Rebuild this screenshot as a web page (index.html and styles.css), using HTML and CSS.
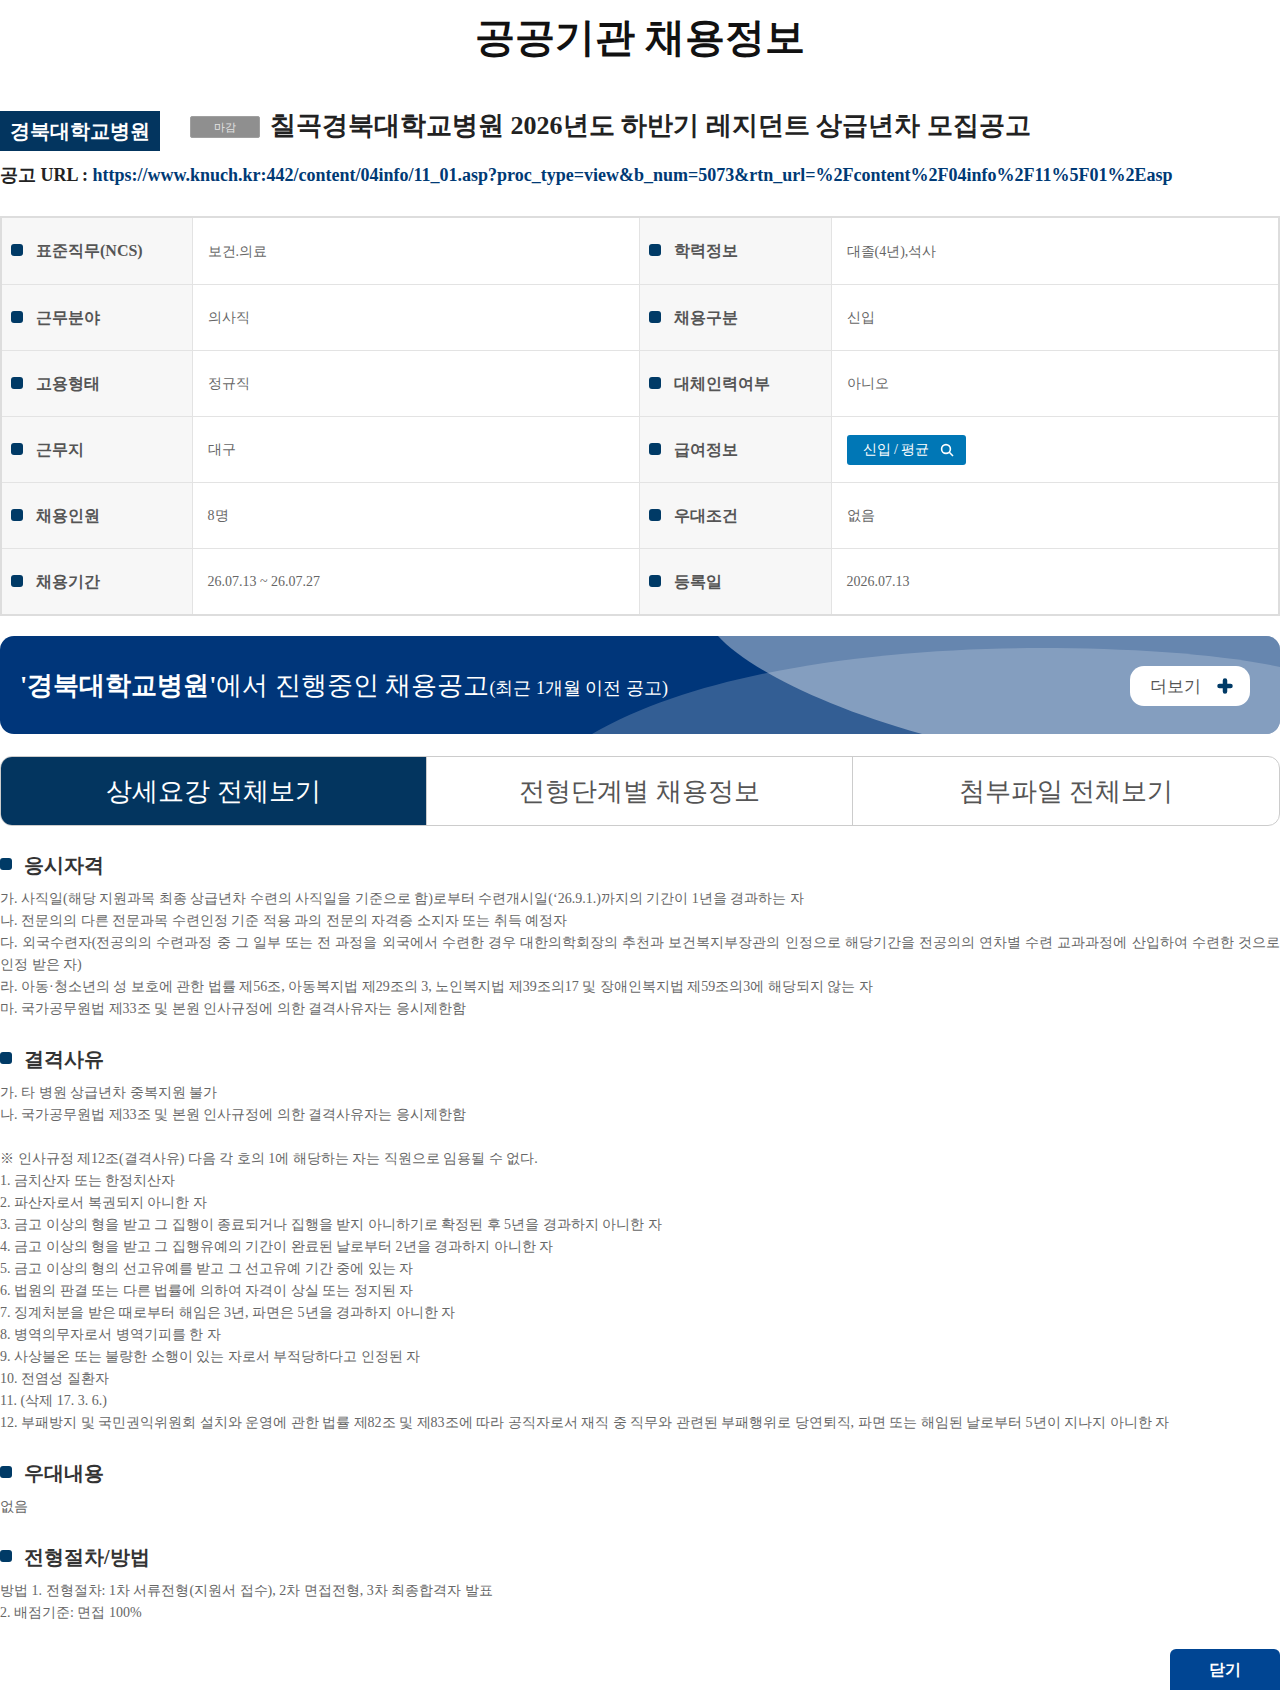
FILE: index.html
```html
<!DOCTYPE html>
<html>
<head>
  <meta charset="UTF-8">
  <title>공공기관 채용정보</title>
  <link rel="stylesheet" href="styles.css">
</head>
<body>
  <h1 class="page-title">공공기관 채용정보</h1>

  <!-- 공고 제목 -->
  <div class="job-head">
    <span class="org-name">경북대학교병원</span>
    <span class="closed">마감</span>
    <h2 class="job-title">칠곡경북대학교병원 2026년도 하반기 레지던트 상급년차 모집공고</h2>
  </div>
  <p class="job-url">공고 URL : <a href="#">https://www.knuch.kr:442/content/04info/11_01.asp?proc_type=view&amp;b_num=5073&amp;rtn_url=%2Fcontent%2F04info%2F11%5F01%2Easp</a></p>

  <!-- 요약 표 -->
  <table class="info">
    <tr>
      <th><span class="dot"></span>표준직무(NCS)</th><td>보건.의료</td>
      <th><span class="dot"></span>학력정보</th><td>대졸(4년),석사</td>
    </tr>
    <tr>
      <th><span class="dot"></span>근무분야</th><td>의사직</td>
      <th><span class="dot"></span>채용구분</th><td>신입</td>
    </tr>
    <tr>
      <th><span class="dot"></span>고용형태</th><td>정규직</td>
      <th><span class="dot"></span>대체인력여부</th><td>아니오</td>
    </tr>
    <tr>
      <th><span class="dot"></span>근무지</th><td>대구</td>
      <th><span class="dot"></span>급여정보</th>
      <td>
        <a class="pay-btn" href="#">신입 / 평균
          <svg width="14" height="14" viewBox="0 0 14 14" fill="none" stroke="#fff" stroke-width="1.6"><circle cx="6" cy="6" r="4.4"/><path d="M9.3 9.3L13 13"/></svg>
        </a>
      </td>
    </tr>
    <tr>
      <th><span class="dot"></span>채용인원</th><td>8명</td>
      <th><span class="dot"></span>우대조건</th><td>없음</td>
    </tr>
    <tr>
      <th><span class="dot"></span>채용기간</th><td>26.07.13 ~ 26.07.27</td>
      <th><span class="dot"></span>등록일</th><td>2026.07.13</td>
    </tr>
  </table>

  <!-- 진행중인 공고 배너 -->
  <div class="banner">
    <svg class="banner-bg" width="1280" height="98" viewBox="0 0 1280 98">
      <path d="M718 0C745 30 820 70 922 98L1280 98L1280 0Z" fill="#fff" fill-opacity="0.4"/>
      <path d="M592 98C700 35 880 12 1040 12C1130 12 1220 18 1280 31L1280 98Z" fill="#fff" fill-opacity="0.2"/>
    </svg>
    <p class="banner-text"><b>'경북대학교병원'</b>에서 진행중인 채용공고<small>(최근 1개월 이전 공고)</small></p>
    <a class="more" href="#">더보기
      <svg width="16" height="16" viewBox="0 0 16 16"><path d="M8 2.5V13.5M2.5 8H13.5" stroke="#003a66" stroke-width="4.5" stroke-linecap="round"/></svg>
    </a>
  </div>

  <div class="tabs">
    <a class="tab active" href="#">상세요강 전체보기</a>
    <a class="tab" href="#">전형단계별 채용정보</a>
    <a class="tab" href="#">첨부파일 전체보기</a>
  </div>

  <!-- 상세 내용 -->
  <section class="detail">
    <h3><span class="dot"></span>응시자격</h3>
    <p>가. 사직일(해당 지원과목 최종 상급년차 수련의 사직일을 기준으로 함)로부터 수련개시일(‘26.9.1.)까지의 기간이 1년을 경과하는 자<br>
    나. 전문의의 다른 전문과목 수련인정 기준 적용 과의 전문의 자격증 소지자 또는 취득 예정자<br>
    다. 외국수련자(전공의의 수련과정 중 그 일부 또는 전 과정을 외국에서 수련한 경우 대한의학회장의 추천과 보건복지부장관의 인정으로 해당기간을 전공의의 연차별 수련 교과과정에 산입하여 수련한 것으로 인정 받은 자)<br>
    라. 아동·청소년의 성 보호에 관한 법률 제56조, 아동복지법 제29조의 3, 노인복지법 제39조의17 및 장애인복지법 제59조의3에 해당되지 않는 자<br>
    마. 국가공무원법 제33조 및 본원 인사규정에 의한 결격사유자는 응시제한함</p>
  </section>
  <section class="detail">
    <h3><span class="dot"></span>결격사유</h3>
    <p>가. 타 병원 상급년차 중복지원 불가<br>
    나. 국가공무원법 제33조 및 본원 인사규정에 의한 결격사유자는 응시제한함<br>
    <br>
    ※ 인사규정 제12조(결격사유) 다음 각 호의 1에 해당하는 자는 직원으로 임용될 수 없다.<br>
    1. 금치산자 또는 한정치산자<br>
    2. 파산자로서 복권되지 아니한 자<br>
    3. 금고 이상의 형을 받고 그 집행이 종료되거나 집행을 받지 아니하기로 확정된 후 5년을 경과하지 아니한 자<br>
    4. 금고 이상의 형을 받고 그 집행유예의 기간이 완료된 날로부터 2년을 경과하지 아니한 자<br>
    5. 금고 이상의 형의 선고유예를 받고 그 선고유예 기간 중에 있는 자<br>
    6. 법원의 판결 또는 다른 법률에 의하여 자격이 상실 또는 정지된 자<br>
    7. 징계처분을 받은 때로부터 해임은 3년, 파면은 5년을 경과하지 아니한 자<br>
    8. 병역의무자로서 병역기피를 한 자<br>
    9. 사상불온 또는 불량한 소행이 있는 자로서 부적당하다고 인정된 자<br>
    10. 전염성 질환자<br>
    11. (삭제 17. 3. 6.)<br>
    12. 부패방지 및 국민권익위원회 설치와 운영에 관한 법률 제82조 및 제83조에 따라 공직자로서 재직 중 직무와 관련된 부패행위로 당연퇴직, 파면 또는 해임된 날로부터 5년이 지나지 아니한 자</p>
  </section>
  <section class="detail">
    <h3><span class="dot"></span>우대내용</h3>
    <p>없음</p>
  </section>
  <section class="detail">
    <h3><span class="dot"></span>전형절차/방법</h3>
    <p>방법 1. 전형절차: 1차 서류전형(지원서 접수), 2차 면접전형, 3차 최종합격자 발표<br>
    2. 배점기준: 면접 100%</p>
  </section>

  <div class="foot">
    <a class="close-btn" href="#">닫기</a>
  </div>
</body>
</html>
```

FILE: styles.css
```css
* {
  box-sizing: border-box;
}
body {
  margin: 0;
  /* No CJK family named on purpose: the KR, JP and SC families set hangul
     narrower than the reference, the browser's fallback matches it */
  font-family: "Liberation Serif", serif;
  background-color: #fff;
  color: #555;
  font-size: 14px;
}
a {
  text-decoration: none;
}
.page-title {
  margin: 0;
  padding-top: 14px;
  height: 111px;
  font-size: 40px;
  line-height: 48px;
  text-align: center;
  color: #111;
}
.job-head {
  display: flex;
  align-items: flex-start;
  height: 40px;
}
.org-name {
  width: 160px;
  height: 40px;
  line-height: 40px;
  background-color: #03355f;
  color: #fff;
  font-size: 20px;
  font-weight: bold;
  text-align: center;
}
.closed {
  width: 70px;
  height: 22px;
  margin: 5px 0 0 30px;
  line-height: 20px;
  background-color: #8f8f8f;
  border: 1px solid #a0a0a0;
  border-radius: 2px;
  color: #e4e4e4;
  font-size: 11px;
  text-align: center;
}
.job-title {
  margin: 0 0 0 10px;
  font-size: 26px;
  line-height: 30px;
  color: #222;
}
.job-url {
  margin: 8px 0 0;
  height: 57px;
  font-size: 18px;
  line-height: 32px;
  font-weight: bold;
  color: #222;
}
.job-url a {
  color: #003a75;
}
.info {
  width: 1280px;
  table-layout: fixed;
  border-collapse: collapse;
  border: 2px solid #ddd;
}
.info tr {
  height: 66px;
}
.info tr:first-child {
  height: 67px;
}
.info tr:last-child {
  height: 67px;
}
.info th,
.info td {
  border: 1px solid #e3e3e3;
  padding: 2px 0 0 15px;
  text-align: left;
  font-size: 14px;
  color: #666;
}
.info th {
  width: 191px;
  padding-left: 9px;
  background-color: #f7f7f7;
  font-size: 16px;
  color: #555;
}
.info th:nth-child(3) {
  width: 192px;
}
.info td:nth-child(2) {
  width: 447px;
}
.dot {
  display: inline-block;
  width: 12px;
  height: 12px;
  margin-right: 13px;
  border-radius: 3px;
  background-color: #003a66;
}
.pay-btn {
  display: inline-flex;
  align-items: center;
  gap: 11px;
  height: 30px;
  padding: 0 12px 0 16px;
  border-radius: 3px;
  background-color: #0077b6;
  color: #fff;
}
.banner {
  position: relative;
  display: flex;
  align-items: center;
  justify-content: space-between;
  height: 98px;
  margin-top: 20px;
  padding: 0 30px 0 20px;
  border-radius: 14px;
  background-color: #00367a;
  overflow: hidden;
}
.banner-bg {
  position: absolute;
  left: 0;
  top: 0;
}
.banner-text {
  position: relative;
  margin: 0;
  color: #fff;
  font-size: 26px;
}
.banner-text small {
  font-size: 18px;
}
.more {
  position: relative;
  display: flex;
  align-items: center;
  justify-content: space-between;
  width: 120px;
  height: 40px;
  margin-top: 2px;
  padding: 0 17px 0 20px;
  border-radius: 14px;
  background-color: #fff;
  color: #555;
  font-size: 17px;
}
.tabs {
  display: flex;
  height: 70px;
  margin-top: 22px;
  border: 1px solid #ccc;
  border-radius: 12px;
  overflow: hidden;
}
.tab {
  flex: 1;
  line-height: 70px;
  text-align: center;
  font-size: 26px;
  color: #555;
  border-left: 1px solid #ccc;
}
.tab:last-child {
  flex: none;
  width: 427px;
}
.tab.active {
  background-color: #03355f;
  color: #fff;
  border-left: none;
}
.detail {
  margin-top: 24px;
}
.detail h3 {
  margin: 0 0 8px;
  font-size: 20px;
  line-height: 30px;
  color: #333;
}
.detail .dot {
  margin-right: 12px;
  vertical-align: 2px;
}
.detail p {
  margin: 0;
  line-height: 22px;
  color: #666;
  text-align: justify;
}
.foot {
  display: flex;
  justify-content: flex-end;
  margin-top: 25px;
}
.close-btn {
  width: 110px;
  height: 41px;
  line-height: 41px;
  border-radius: 6px 6px 0 0;
  background-color: #004593;
  color: #fff;
  font-size: 16px;
  font-weight: bold;
  text-align: center;
}
```
